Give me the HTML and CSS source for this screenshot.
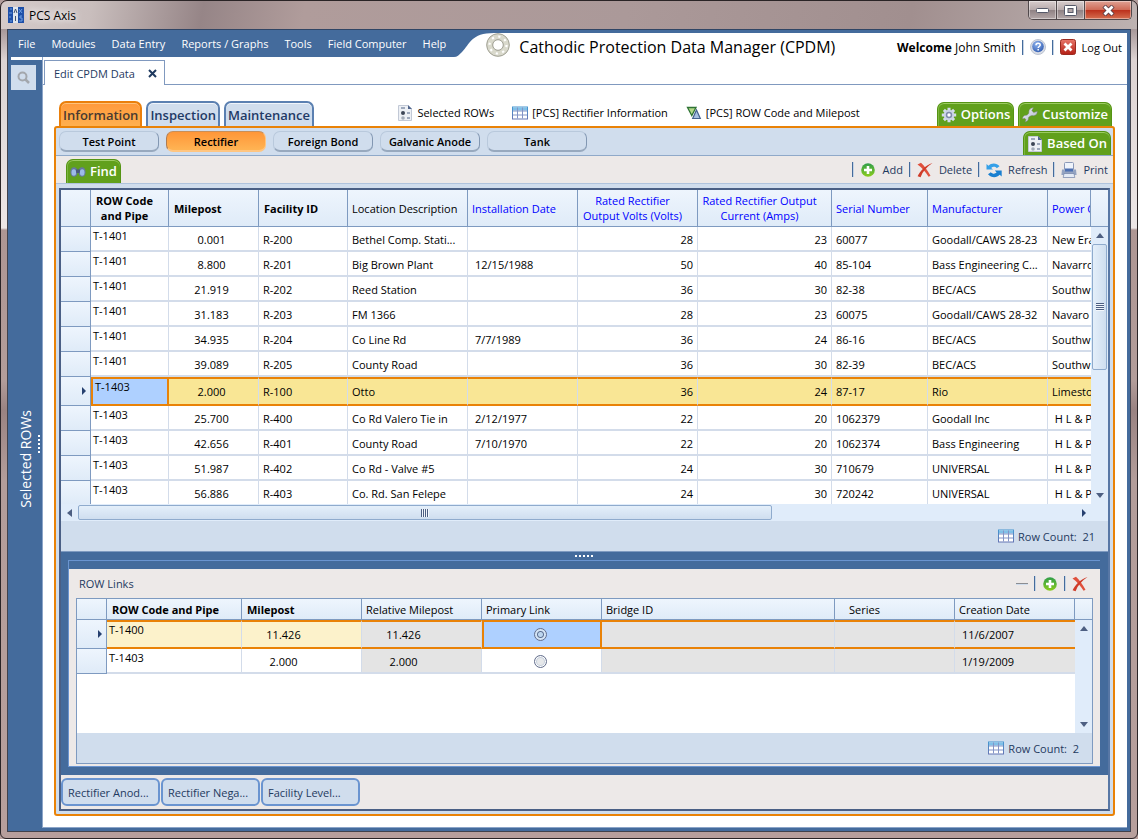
FILE: index.html
```html
<!DOCTYPE html>
<html lang="en">
<head>
    <meta charset="UTF-8">
    <meta name="viewport" content="width=device-width, initial-scale=1.0">
    <title>PCS Axis</title>
    <link rel="stylesheet" href="styles.css">
</head>
<body>
    <!-- shared icons -->
    <svg class="sprite" aria-hidden="true">
        <defs>
            <linearGradient id="g-green" x1="0" y1="0" x2="0" y2="1"><stop offset="0" stop-color="#2f9e4b"/><stop offset="1" stop-color="#8ccc1d"/></linearGradient>
            <linearGradient id="g-red" x1="0" y1="0" x2="0" y2="1"><stop offset="0" stop-color="#e8776b"/><stop offset="1" stop-color="#b41f14"/></linearGradient>
            <linearGradient id="g-table" x1="0" y1="0" x2="0" y2="1"><stop offset="0" stop-color="#4796d0"/><stop offset="1" stop-color="#6575b4"/></linearGradient>
            <linearGradient id="g-steel" x1="0" y1="0" x2="1" y2="1"><stop offset="0" stop-color="#f3f5fa"/><stop offset="1" stop-color="#a9b2c8"/></linearGradient>
            <radialGradient id="g-ball" cx=".4" cy=".3" r=".8"><stop offset="0" stop-color="#8fb4ef"/><stop offset="1" stop-color="#2b56ad"/></radialGradient>
        </defs>
        <symbol id="i-add" viewBox="0 0 16 16">
            <circle cx="8" cy="8" r="6.8" fill="url(#g-green)"/>
            <path d="M8 4v8M4 8h8" stroke="#fff" stroke-width="2.6"/>
        </symbol>
        <symbol id="i-delete" viewBox="0 0 16 16">
            <path d="M.5 2.500L4 .8c3.200 3 6.800 7.700 9.500 13l-1.900.9C8.500 9.800 5 5.800.5 2.500z" fill="#e0503c"/>
            <path d="M15.500 1C9.800 4.800 5.600 9.500 3.600 15.200l-3-.9C3.200 8.500 8.500 3.500 15.500 1z" fill="#cf3b28"/>
        </symbol>
        <symbol id="i-refresh" viewBox="0 0 16 16">
            <path d="M.5 7.500V2l2 1.700C5.300.5 10.800.6 13.500 4.200L10.800 6.200C9.200 4.400 6.800 4.400 5.200 5.900L7 7.500z" fill="#35a0e8"/>
            <path d="M15.700 8.500v5.900l-2-1.600C10.600 16.200 5 15.900 2 12.200l2.800-2c1.800 1.900 4.100 1.900 5.800.4L8.800 8.500z" fill="#1a7fd0"/>
        </symbol>
        <symbol id="i-print" viewBox="0 0 16 16">
            <rect x="3.500" y=".5" width="9" height="8" rx="1" fill="#eef3fb" stroke="#8a99b8"/>
            <path d="M1 7.500h2.500v1h9v-1H15l.6 5.500H.4z" fill="#94a3c1"/>
            <path d="M4 6.500h8v3H4z" fill="#4c6fb1"/>
            <path d="M3 11.500h10l.8 4H2.200z" fill="#e4eaf5" stroke="#7182a8" stroke-width=".7"/>
        </symbol>
        <symbol id="i-table" viewBox="0 0 16 13">
            <rect x=".5" y=".5" width="15" height="12" fill="#fff" stroke="url(#g-table)"/>
            <rect x="1" y="1" width="14" height="3" fill="#7fc0e8"/>
            <path d="M1 4.500h14M1 8.500h14M5.500 1v11M10.500 1v11" stroke="#8394c6"/>
        </symbol>
        <symbol id="i-list" viewBox="0 0 14 16">
            <path d="M.5.5h9.500L13.500 4v11.500H.5z" fill="#edf0f5" stroke="#c2c9d6"/>
            <path d="M10 0v4h4z" fill="#51658c"/>
            <circle cx="5" cy="8" r="2" fill="#3d4656"/>
            <circle cx="5" cy="13" r="1.800" fill="#a5adba"/>
            <path d="M3 3h4M9 8h3M9 13h3" stroke="#8592ab" stroke-width="1.500"/>
        </symbol>
        <symbol id="i-milepost" viewBox="0 0 16 16">
            <path d="M1.500 2.500h8.500L5.800 10.500z" fill="#b5d88a" stroke="#2f7435" stroke-width="1.300"/>
            <path d="M10.500 5L14.300 13.500H6.700z" fill="#a7bfe2" stroke="#43608f" stroke-width="1.200"/>
        </symbol>
        <symbol id="i-gear" viewBox="0 0 16 16">
            <path d="M8 .8v14.400M.8 8h14.400M2.900 2.900l10.200 10.200M13.100 2.900L2.900 13.100" stroke="#d5dcec" stroke-width="3"/>
            <circle cx="8" cy="8" r="5.300" fill="#cbd3e6"/>
            <circle cx="8" cy="8" r="3.200" fill="#7f8aaa"/>
            <circle cx="8" cy="8" r="1.700" fill="#fff"/>
        </symbol>
        <symbol id="i-wrench" viewBox="0 0 16 16">
            <path d="M11.500.8L9.800 3.600l1.900 2 3.600-1.300c.2 3-2.200 5-4.900 4.200-1.900.2-3.200 1-4 2.300.3 2-.8 3.700-3.400 4.200L4 12.800 2.700 11.300.6 12C.4 9.300 2.200 8 4.300 8.300 6 7.600 6.800 6.700 6.900 5.300 6.600 2.800 8.600.8 11.500.8z" fill="url(#g-steel)" stroke="#77826f" stroke-width=".5"/>
        </symbol>
        <symbol id="i-binoculars" viewBox="0 0 16 12">
            <ellipse cx="4" cy="6" rx="3.600" ry="4.800" fill="#65789f"/>
            <ellipse cx="12" cy="6" rx="3.600" ry="4.800" fill="#65789f"/>
            <path d="M6 3.500h4v3.500H6z" fill="#48597d"/>
            <ellipse cx="3.800" cy="6.500" rx="2.300" ry="3.200" fill="#9dbbe8"/>
            <ellipse cx="12.200" cy="6.500" rx="2.300" ry="3.200" fill="#9dbbe8"/>
        </symbol>
    </svg>

    <header class="titlebar">
        <svg class="app-icon" viewBox="0 0 16 16" aria-hidden="true">
            <rect width="16" height="16" fill="#1d4fa8"/>
            <rect x="5" width="5" height="16" fill="#dfe6ee"/>
            <path d="M2 2h2M1 6h3M1 10h2M2 14h2M11 2l3 4M14 2l-3 4M14 9h-2v2h2v3h-3" stroke="#6fa0e4" fill="none"/>
            <path d="M6 6l1.500-4L9 6M7.500 9v5" stroke="#44526c" fill="none"/>
        </svg>
        <span class="window-title">PCS Axis</span>
        <div class="window-buttons">
            <button type="button" aria-label="Minimize"><svg width="13" height="6"><rect x=".5" y="1.500" width="12" height="4" rx="1" fill="#fff" stroke="#555969"/></svg></button>
            <button type="button" aria-label="Maximize"><svg width="13" height="11"><rect x=".5" y=".5" width="12" height="10" rx="1" fill="#fff" stroke="#555969"/><rect x="4" y="3.500" width="5" height="4" fill="#b5a9aa" stroke="#555969"/></svg></button>
            <button type="button" class="close" aria-label="Close"><svg width="13" height="11" viewBox="0 0 13 11"><path d="M2 1l9 9M11 1L2 10" stroke="#5c3f46" stroke-width="4.500"/><path d="M2.500 1.500l8 8M10.500 1.500l-8 8" stroke="#fff" stroke-width="2.800"/></svg></button>
        </div>
    </header>

    <div class="app">
        <div class="app-header">
            <nav class="menu">
                <a href="#">File</a>
                <a href="#">Modules</a>
                <a href="#">Data Entry</a>
                <a href="#">Reports / Graphs</a>
                <a href="#">Tools</a>
                <a href="#">Field Computer</a>
                <a href="#">Help</a>
            </nav>
            <svg class="swoosh" viewBox="0 0 40 24" aria-hidden="true"><path d="M0 0h40C17 0 16 11 8 19 5 22 3 24 0 24z" fill="#446b9c"/></svg>
            <svg class="product-icon" viewBox="0 0 24 24" aria-hidden="true">
                <circle cx="12" cy="12" r="8.300" fill="none" stroke="#d9d9cc" stroke-width="6.500"/>
                <circle cx="12" cy="12" r="11.300" fill="none" stroke="#a3a397" stroke-width="1"/>
                <circle cx="12" cy="12" r="5.300" fill="#fff" stroke="#9c9c90" stroke-width="1"/>
                <circle cx="12" cy="12" r="8.500" fill="none" stroke="#fff" stroke-width="2.200" stroke-dasharray="2.200 4.475"/>
            </svg>
            <h1>Cathodic Protection Data Manager (CPDM)</h1>
            <div class="user">
                <span class="welcome"><b>Welcome</b> John Smith</span>
                <i class="bar"></i>
                <button type="button" aria-label="Help">
                    <svg class="icon" viewBox="0 0 16 16"><circle cx="8" cy="8" r="7.500" fill="#d9dde6" stroke="#bcc3d1"/><circle cx="8" cy="7.500" r="5.800" fill="url(#g-ball)"/><path d="M6 6.200C6 3.600 10.200 3.700 10.200 6c0 1.500-2 1.500-2 3M8.200 10v1.500" stroke="#fff" stroke-width="1.500" fill="none"/></svg>
                </button>
                <i class="bar"></i>
                <button type="button">
                    <svg class="icon" viewBox="0 0 16 16"><rect x=".5" y=".5" width="15" height="15" rx="2" fill="url(#g-red)" stroke="#9b2a20"/><path d="M4.500 4.500l7 7M11.500 4.500l-7 7" stroke="#fff" stroke-width="2.800"/></svg>
                    Log Out
                </button>
            </div>
        </div>

        <div class="body">
            <aside class="sidebar">
                <button type="button" class="search" aria-label="Search">
                    <svg width="13" height="13" viewBox="0 0 13 13"><circle cx="5.500" cy="5.500" r="4" fill="none" stroke="#a3a7ad" stroke-width="2"/><path d="M8.500 8.500l3.500 3.500" stroke="#a3a7ad" stroke-width="2.500"/></svg>
                </button>
                <span class="side-label">Selected ROWs</span>
                <i class="dots dots-v"></i>
            </aside>

            <main class="content">
                <div class="doc-tabs">
                    <div class="doc-tab">Edit CPDM Data
                        <button type="button" aria-label="Close tab"><svg width="9" height="9" viewBox="0 0 9 9"><path d="M1 1l7 7M8 1L1 8" stroke="#1f3a5f" stroke-width="2"/></svg></button>
                    </div>
                </div>

                <div class="tab-row">
                    <button type="button" class="tab active">Information</button>
                    <button type="button" class="tab">Inspection</button>
                    <button type="button" class="tab">Maintenance</button>
                    <div class="filters">
                        <a href="#"><svg class="icon"><use href="#i-list"/></svg>Selected ROWs</a>
                        <a href="#"><svg class="icon"><use href="#i-table"/></svg>[PCS] Rectifier Information</a>
                        <a href="#"><svg class="icon"><use href="#i-milepost"/></svg>[PCS] ROW Code and Milepost</a>
                    </div>
                    <button type="button" class="green"><svg class="icon"><use href="#i-gear"/></svg>Options</button>
                    <button type="button" class="green"><svg class="icon"><use href="#i-wrench"/></svg>Customize</button>
                </div>

                <section class="panel">
                    <div class="subtabs">
                        <button type="button" class="pill">Test Point</button>
                        <button type="button" class="pill active">Rectifier</button>
                        <button type="button" class="pill">Foreign Bond</button>
                        <button type="button" class="pill">Galvanic Anode</button>
                        <button type="button" class="pill">Tank</button>
                        <button type="button" class="green push"><svg class="icon"><use href="#i-list"/></svg>Based On</button>
                    </div>

                    <div class="toolbar">
                        <button type="button" class="green find"><svg class="icon"><use href="#i-binoculars"/></svg>Find</button>
                        <div class="actions">
                            <i class="bar"></i>
                            <button type="button"><svg class="icon"><use href="#i-add"/></svg>Add</button>
                            <i class="bar"></i>
                            <button type="button"><svg class="icon"><use href="#i-delete"/></svg>Delete</button>
                            <i class="bar"></i>
                            <button type="button"><svg class="icon"><use href="#i-refresh"/></svg>Refresh</button>
                            <i class="bar"></i>
                            <button type="button"><svg class="icon"><use href="#i-print"/></svg>Print</button>
                        </div>
                    </div>

                    <div class="frame">
                        <div class="grid">
                            <div class="grid-scroll">
                                <table class="rectifiers">
                                    <colgroup>
                                        <col class="c-head"><col class="c-row"><col class="c-mile"><col class="c-fac"><col class="c-loc"><col class="c-date"><col class="c-volts"><col class="c-amps"><col class="c-serial"><col class="c-mfr"><col>
                                    </colgroup>
                                    <thead>
                                        <tr>
                                            <th></th>
                                            <th class="key center">ROW Code<br>and Pipe</th>
                                            <th class="key">Milepost</th>
                                            <th class="key">Facility ID</th>
                                            <th>Location Description</th>
                                            <th class="blue">Installation Date</th>
                                            <th class="blue center">Rated Rectifier<br>Output Volts (Volts)</th>
                                            <th class="blue center">Rated Rectifier Output<br>Current (Amps)</th>
                                            <th class="blue">Serial Number</th>
                                            <th class="blue">Manufacturer</th>
                                            <th class="blue">Power C</th>
                                        </tr>
                                    </thead>
                                    <tbody>
                                        <tr><th></th><td class="code">T-1401</td><td class="mile">0.001</td><td>R-200</td><td>Bethel Comp. Stati...</td><td class="date"></td><td class="num">28</td><td class="num">23</td><td>60077</td><td>Goodall/CAWS 28-23</td><td>New Era</td></tr>
                                        <tr><th></th><td class="code">T-1401</td><td class="mile">8.800</td><td>R-201</td><td>Big Brown Plant</td><td class="date">12/15/1988</td><td class="num">50</td><td class="num">40</td><td>85-104</td><td>Bass Engineering C...</td><td>Navarro</td></tr>
                                        <tr><th></th><td class="code">T-1401</td><td class="mile">21.919</td><td>R-202</td><td>Reed Station</td><td class="date"></td><td class="num">36</td><td class="num">30</td><td>82-38</td><td>BEC/ACS</td><td>Southw</td></tr>
                                        <tr><th></th><td class="code">T-1401</td><td class="mile">31.183</td><td>R-203</td><td>FM 1366</td><td class="date"></td><td class="num">28</td><td class="num">23</td><td>60075</td><td>Goodall/CAWS 28-32</td><td>Navaro</td></tr>
                                        <tr><th></th><td class="code">T-1401</td><td class="mile">34.935</td><td>R-204</td><td>Co Line Rd</td><td class="date">7/7/1989</td><td class="num">36</td><td class="num">24</td><td>86-16</td><td>BEC/ACS</td><td>Southw</td></tr>
                                        <tr><th></th><td class="code">T-1401</td><td class="mile">39.089</td><td>R-205</td><td>County Road</td><td class="date"></td><td class="num">36</td><td class="num">30</td><td>82-39</td><td>BEC/ACS</td><td>Southw</td></tr>
                                        <tr class="current"><th><i class="arrow right"></i></th><td class="code focus">T-1403</td><td class="mile">2.000</td><td>R-100</td><td>Otto</td><td class="date"></td><td class="num">36</td><td class="num">24</td><td>87-17</td><td>Rio</td><td>Limesto</td></tr>
                                        <tr><th></th><td class="code">T-1403</td><td class="mile">25.700</td><td>R-400</td><td>Co Rd Valero Tie in</td><td class="date">2/12/1977</td><td class="num">22</td><td class="num">20</td><td>1062379</td><td>Goodall Inc</td><td>&nbsp;H L &amp; P</td></tr>
                                        <tr><th></th><td class="code">T-1403</td><td class="mile">42.656</td><td>R-401</td><td>County Road</td><td class="date">7/10/1970</td><td class="num">22</td><td class="num">20</td><td>1062374</td><td>Bass Engineering</td><td>&nbsp;H L &amp; P</td></tr>
                                        <tr><th></th><td class="code">T-1403</td><td class="mile">51.987</td><td>R-402</td><td>Co Rd - Valve #5</td><td class="date"></td><td class="num">24</td><td class="num">30</td><td>710679</td><td>UNIVERSAL</td><td>&nbsp;H L &amp; P</td></tr>
                                        <tr><th></th><td class="code">T-1403</td><td class="mile">56.886</td><td>R-403</td><td>Co. Rd. San Felepe</td><td class="date"></td><td class="num">24</td><td class="num">30</td><td>720242</td><td>UNIVERSAL</td><td>&nbsp;H L &amp; P</td></tr>
                                    </tbody>
                                </table>
                            </div>
                            <div class="vscroll">
                                <div class="cap"></div>
                                <i class="arrow up"></i>
                                <div class="thumb"><i class="grip"></i></div>
                                <i class="arrow down"></i>
                            </div>
                        </div>
                        <div class="hscroll">
                            <i class="arrow left"></i>
                            <div class="track"><div class="thumb"><i class="grip"></i></div></div>
                            <i class="arrow right"></i>
                        </div>
                        <div class="row-count"><svg class="icon"><use href="#i-table"/></svg>Row Count:&nbsp; 21</div>

                        <div class="links-wrap">
                            <i class="dots"></i>
                            <div class="links">
                                <div class="links-head">
                                    <h2>ROW Links</h2>
                                    <button type="button" aria-label="Collapse"><i class="dash"></i></button>
                                    <i class="bar"></i>
                                    <button type="button" aria-label="Add link"><svg class="icon"><use href="#i-add"/></svg></button>
                                    <i class="bar"></i>
                                    <button type="button" aria-label="Delete link"><svg class="icon"><use href="#i-delete"/></svg></button>
                                </div>
                                <div class="links-box">
                                    <div class="grid links-grid">
                                        <div class="grid-scroll">
                                            <table class="row-links">
                                                <colgroup>
                                                    <col class="c-head"><col class="c-code"><col class="c-std"><col class="c-std"><col class="c-std"><col><col class="c-std"><col class="c-std">
                                                </colgroup>
                                                <thead>
                                                    <tr>
                                                        <th></th>
                                                        <th class="key">ROW Code and Pipe</th>
                                                        <th class="key">Milepost</th>
                                                        <th>Relative Milepost</th>
                                                        <th>Primary Link</th>
                                                        <th>Bridge ID</th>
                                                        <th class="indent">Series</th>
                                                        <th>Creation Date</th>
                                                    </tr>
                                                </thead>
                                                <tbody>
                                                    <tr class="current"><th><i class="arrow right"></i></th><td class="code">T-1400</td><td class="mile">11.426</td><td class="mile off">11.426</td><td class="pick focus"><input type="radio" name="primary" aria-label="T-1400 primary link" checked></td><td class="off"></td><td class="off"></td><td class="date off">11/6/2007</td></tr>
                                                    <tr><th></th><td class="code">T-1403</td><td class="mile">2.000</td><td class="mile off">2.000</td><td class="pick"><input type="radio" name="primary" aria-label="T-1403 primary link"></td><td class="off"></td><td class="off"></td><td class="date off">1/19/2009</td></tr>
                                                </tbody>
                                            </table>
                                        </div>
                                        <div class="vscroll">
                                            <div class="cap"></div>
                                            <i class="arrow up"></i>
                                            <i class="arrow down"></i>
                                        </div>
                                    </div>
                                    <div class="row-count"><svg class="icon"><use href="#i-table"/></svg>Row Count:&nbsp; 2</div>
                                </div>
                            </div>
                        </div>

                        <div class="bottom-tabs">
                            <button type="button">Rectifier Anod...</button>
                            <button type="button">Rectifier Nega...</button>
                            <button type="button">Facility Level...</button>
                        </div>
                    </div>
                </section>
            </main>
        </div>
    </div>
</body>
</html>
```
FILE: styles.css
```css
* {
    box-sizing: border-box;
}
body {
    margin: 0;
    height: 100vh;
    display: flex;
    flex-direction: column;
    font-family: "Open Sans", "Noto Sans", sans-serif;
    font-size: 11px;
    line-height: 15px;
    color: #000;
    border: 1px solid #2a2426;
    border-radius: 7px 7px 6px 6px;
    padding: 0 6px 6px;
    background: linear-gradient(#b39d9c 0, #a29293 26px, #ddd3d2 60px, #ece6e6 228px, #ae9693 230px, #b39d9a 380px, #9a8382 410px, #b39d9a 480px, #b79f9c 100%);
    overflow: hidden;
}
button {
    font: inherit;
    color: inherit;
    padding: 0;
    border: 0;
    background: none;
    cursor: pointer;
}
a {
    color: inherit;
    text-decoration: none;
}
h1, h2 {
    margin: 0;
    font-weight: normal;
}
.sprite {
    position: absolute;
    width: 0;
    height: 0;
}
.icon {
    width: 16px;
    height: 16px;
    flex: none;
}
.bar {
    width: 2px;
    height: 15px;
    background: #446b9c;
    border-right: 1px solid #c5d3e4;
}

/* window chrome */
.titlebar {
    display: flex;
    align-items: center;
    gap: 5px;
    flex: none;
    height: 28px;
    margin: 0 -6px;
    padding-left: 7px;
    background: linear-gradient(100deg, #d5cbca 0, #c9bebd 90px, #968587 200px, #b09c9b 300px, #ab9999 55%, #a18f8f 80%, #bdb2b1 100%);
    border-radius: 7px 7px 0 0;
}
.app-icon {
    width: 16px;
    height: 16px;
}
.window-title {
    font-size: 12px;
    text-shadow: 0 0 6px #fff, 0 0 10px #fff;
}
.window-buttons {
    display: flex;
    align-self: flex-start;
    height: 19px;
    margin: 0 5px 0 auto;
    border: 1px solid #50484b;
    border-top: 0;
    border-radius: 0 0 5px 5px;
    overflow: hidden;
}
.window-buttons button {
    width: 28px;
    display: flex;
    align-items: center;
    justify-content: center;
    background: linear-gradient(#d8cdcd, #b7aaab 48%, #8e8183 50%, #b3a7a8);
    border-right: 1px solid #50484b;
    box-shadow: inset 0 0 0 1px rgba(255, 255, 255, 0.4);
}
.window-buttons .close {
    width: 46px;
    border-right: 0;
    background: linear-gradient(#e0a294, #cf6b57 48%, #bb2f1b 50%, #d56f50);
}
.app {
    flex: 1;
    min-height: 0;
    display: flex;
    flex-direction: column;
    background: #446b9c;
    border: 1px solid #41424c;
    border-top-color: #2f4565;
    padding-right: 3px;
    padding-bottom: 3px;
}

/* header */
.app-header {
    display: flex;
    flex: none;
    height: 27px;
    border-top: 3px solid #446b9c;
    background: #fff;
}
.menu {
    display: flex;
    align-items: center;
    gap: 16px;
    flex: none;
    padding: 0 8px 3px 10px;
    background: #446b9c;
    color: #fff;
}
.swoosh {
    width: 40px;
    height: 24px;
    flex: none;
}
.product-icon {
    width: 24px;
    height: 24px;
    flex: none;
    margin: 0 9px 0 -8px;
}
.app-header h1 {
    font-size: 16px;
    line-height: 28px;
    white-space: nowrap;
}
.user {
    display: flex;
    align-items: center;
    gap: 6px;
    height: 28px;
    margin-left: auto;
    padding-right: 5px;
    white-space: nowrap;
}
.welcome {
    font-size: 12px;
}
.user button {
    display: flex;
    align-items: center;
    gap: 6px;
}

.body {
    flex: 1;
    min-height: 0;
    display: flex;
}
.sidebar {
    position: relative;
    width: 34px;
    display: flex;
    flex-direction: column;
    align-items: center;
    color: #fff;
}
.sidebar::before {
    content: "";
    align-self: stretch;
    height: 3px;
    margin-left: 3px;
    background: #fff;
}
.search {
    align-self: flex-start;
    width: 25px;
    height: 25px;
    margin: 5px 0 0 3px;
    display: flex;
    align-items: center;
    justify-content: center;
    background: #d0dded;
}
.side-label {
    margin: auto;
    font-size: 14px;
    writing-mode: vertical-rl;
    transform: rotate(180deg);
}
.dots {
    display: block;
    width: 18px;
    height: 2px;
    margin: 0 auto;
    background: repeating-linear-gradient(90deg, #fff 0 2px, transparent 2px 4px);
}
.dots-v {
    position: absolute;
    right: 2px;
    top: 49%;
    width: 2px;
    height: 18px;
    background: repeating-linear-gradient(#fff 0 2px, transparent 2px 4px);
}
.content {
    flex: 1;
    min-width: 0;
    display: flex;
    flex-direction: column;
    background: #fff;
    border-left: 1px solid #8ca5c8;
    border-bottom: 1px solid #8ca5c8;
    padding: 3px 12px 11px 11px;
}
.doc-tabs {
    display: flex;
    height: 25px;
    margin: 0 -12px 0 -11px;
    padding-left: 1px;
    border-bottom: 1px solid #8099bf;
}
.doc-tab {
    display: flex;
    align-items: center;
    gap: 13px;
    height: 25px;
    padding: 0 7px 0 9px;
    background: #fff;
    border: 1px solid #8099bf;
    border-bottom: 0;
    color: #1f3a5f;
}

.tab-row {
    display: flex;
    align-items: flex-end;
    gap: 4px;
    height: 41px;
    padding: 0 3px 0 5px;
}
.tab {
    height: 25px;
    padding: 0 2px;
    font-size: 13px;
    line-height: 24px;
    font-weight: 600;
    color: #1f3a66;
    background: #d0dded;
    border: 2px solid #5b80b1;
    border-bottom: 0;
    border-radius: 7px 7px 0 0;
    box-shadow: inset 0 1px 0 #f0f5fb;
}
.tab.active {
    color: #4a3a30;
    background: linear-gradient(#ff993b, #ffb04f);
    border-color: #ea7f0b;
    box-shadow: inset 0 1px 0 #ffc27a;
}
.filters {
    display: flex;
    align-self: center;
    gap: 18px;
    margin: 14px 73px 0 auto;
    white-space: nowrap;
}
.filters a {
    display: flex;
    align-items: center;
    gap: 4px;
}
.green {
    display: flex;
    align-items: center;
    gap: 4px;
    height: 24px;
    padding: 0 3px;
    color: #fff;
    font-size: 13px;
    font-weight: 600;
    background: #61a01c;
    border: 1px solid #559414;
    border-bottom: 0;
    border-radius: 7px 7px 0 0;
    box-shadow: inset 0 1px 0 #9ccb62, inset 1px 0 0 #7db53f;
}

/* main panel */
.panel {
    flex: 1;
    min-height: 0;
    display: flex;
    flex-direction: column;
    border: 2px solid #e98207;
    border-radius: 3px;
    background: #d0dded;
}
.subtabs {
    display: flex;
    align-items: center;
    gap: 7px;
    height: 28px;
    flex: none;
    padding: 0 2px 0 3px;
    border-bottom: 1px solid #8fa9c9;
}
.pill {
    width: 100px;
    height: 21px;
    font-weight: 600;
    background: #d0dded;
    border: 1px solid #b9c9dc;
    border-right-color: #8297b2;
    border-bottom: 2px solid #98a9be;
    border-radius: 7px;
}
.pill.active {
    background: linear-gradient(#ff9638, #ffb454);
    border-color: #c98f58 #ffc580 #ffc580 #b07c50;
}
.push {
    margin-left: auto;
    align-self: flex-end;
}
.toolbar {
    display: flex;
    align-items: flex-end;
    justify-content: space-between;
    height: 28px;
    flex: none;
    padding: 0 5px 0 10px;
    background: #ede9e8;
    border-bottom: 1px solid #afc3dd;
    color: #1f3a5f;
}
.actions {
    display: flex;
    align-items: center;
    align-self: center;
    gap: 6px;
}
.actions button {
    display: flex;
    align-items: center;
    gap: 6px;
}
.frame {
    flex: 1;
    min-height: 0;
    display: flex;
    flex-direction: column;
    margin: 4px 3px 3px;
    border: 2px solid #4a5f85;
    border-right-color: #5877a5;
    background: #446b9c;
}

/* grids */
.grid {
    display: flex;
    background: #fff;
}
.grid-scroll {
    flex: 1;
    min-width: 0;
    overflow: hidden;
}
table {
    width: 100%;
    table-layout: fixed;
    border-collapse: separate;
    border-spacing: 0;
}
.c-head { width: 30px; }
.c-row { width: 78px; }
.c-mile { width: 90px; }
.c-fac { width: 89px; }
.c-loc, .c-volts, .c-mfr, .c-std { width: 120px; }
.c-date { width: 110px; }
.c-amps { width: 134px; }
.c-serial { width: 96px; }
.c-code { width: 135px; }
th {
    font-weight: normal;
    text-align: left;
    background: linear-gradient(#eef5fd, #dfebf8);
    border-right: 1px solid #7e9ac0;
    border-bottom: 1px solid #7e9ac0;
}
thead th {
    height: 37px;
    padding: 0 4px;
}
.rectifiers thead th:last-child {
    white-space: nowrap;
    overflow: hidden;
}
.row-links thead th {
    height: 21px;
}
th.key {
    font-weight: bold;
    padding-left: 5px;
}
th.center {
    text-align: center;
    padding: 0 12px 0 2px;
}
th.blue {
    color: #0000ff;
}
th.indent {
    padding-left: 14px;
}
td {
    height: 25px;
    padding: 1px 4px 0;
    white-space: nowrap;
    overflow: hidden;
    text-overflow: ellipsis;
    border-right: 1px solid #d3dcea;
    border-bottom: 2px solid #d3dcea;
}
td:last-child {
    text-overflow: clip;
    border-right: 0;
}
td.code {
    padding: 1px 2px;
    vertical-align: top;
}
td.mile {
    padding-right: 8px;
    text-align: center;
}
.row-links .mile {
    padding-right: 40px;
}
td.num {
    text-align: right;
}
td.date {
    padding-left: 7px;
}
td.off {
    background: #e4e4e4;
}
td.pick {
    padding-right: 7px;
}
.current td {
    height: 29px;
    padding-top: 0;
    background: #f9e695;
    border-top: 2px solid #e98207;
    border-bottom: 2px solid #e98207;
}
.rectifiers tr:last-child td,
.rectifiers tbody tr:last-child th {
    height: 23px;
    border-bottom: 0;
}
.row-links .current td {
    background: #fcf2cb;
}
.row-links .current .off {
    background: #e4e4e4;
}
.current .focus,
.row-links .current .focus {
    background: #aed0ff;
    border: 2px solid #e98207;
}
tbody th .arrow {
    display: block;
    margin: 0 3px 0 auto;
}
input[type="radio"] {
    appearance: none;
    display: block;
    width: 13px;
    height: 13px;
    margin: 0 auto;
    border: 1px solid #646f8d;
    border-radius: 50%;
    background: #e6e8ea;
    box-shadow: inset 0 0 0 1px #fff, inset 0 0 0 2px #c6cfdb;
}
input[type="radio"]:checked {
    background: radial-gradient(circle, #bdd6ef 0 2px, #5c6f92 3px, #d4e4f5 4px);
    box-shadow: none;
}

/* scrollbars */
.arrow {
    width: 0;
    height: 0;
    border: 4px solid transparent;
}
.arrow.right { border-left: 4px solid #26406f; border-right: 0; }
.arrow.left { border-right: 5px solid #4d5f82; border-left: 0; }
.arrow.up { border-bottom: 5px solid #4d5f82; border-top: 0; }
.arrow.down { border-top: 5px solid #4d5f82; border-bottom: 0; }
.vscroll {
    width: 17px;
    display: flex;
    flex-direction: column;
    align-items: center;
    background: #e0ecfa;
}
.vscroll .cap {
    align-self: stretch;
    height: 37px;
    background: linear-gradient(#eef5fd, #dfebf8);
    border-bottom: 1px solid #7e9ac0;
}
.vscroll .up {
    margin: 6px 0;
}
.vscroll .down {
    margin: auto 0 6px;
}
.thumb {
    display: flex;
    align-items: center;
    justify-content: center;
    background: linear-gradient(90deg, #e4effa, #cfdeef);
    border: 1px solid #8fabcd;
    border-radius: 2px;
}
.vscroll .thumb {
    width: 15px;
    height: 126px;
}
.grip {
    width: 8px;
    height: 8px;
    background: repeating-linear-gradient(#4d5f82 0 1px, #f3f7fc 1px 2px);
}
.hscroll {
    display: flex;
    align-items: center;
    flex: none;
    height: 17px;
    padding: 0 22px 0 6px;
    background: #e0ecfa;
}
.hscroll .track {
    flex: 1;
    margin: 0 12px 0 6px;
}
.hscroll .thumb {
    width: 70%;
    height: 15px;
    background: linear-gradient(#e4effa, #cfdeef);
}
.hscroll .grip {
    background: repeating-linear-gradient(90deg, #4d5f82 0 1px, #f3f7fc 1px 2px);
}
.row-count {
    display: flex;
    align-items: center;
    justify-content: flex-end;
    gap: 4px;
    flex: none;
    height: 30px;
    padding-right: 13px;
    background: #d0dded;
    color: #1f3a5f;
}

/* linked rows */
.links-wrap {
    flex: 1;
    min-height: 0;
    display: flex;
    flex-direction: column;
    padding: 3px 8px 8px 7px;
    border-top: 1px solid #7e9ac0;
}
.links {
    flex: 1;
    min-height: 0;
    display: flex;
    flex-direction: column;
    margin-top: 3px;
    padding: 0 7px 2px;
    background: #ede9e8;
    border: 1px solid #6a94d0;
    border-top: 0;
    border-right: 0;
}
.links::before {
    content: "";
    flex: none;
    height: 8px;
    margin: 0 -7px;
    background: #446b9c;
    border-top: 1px solid #6a94d0;
}
.links-head {
    display: flex;
    align-items: center;
    gap: 6px;
    flex: none;
    height: 29px;
    padding: 0 5px 0 3px;
}
.links-head h2 {
    margin-right: auto;
    font-size: 11px;
    color: #1f3a5f;
}
.links-head button {
    display: flex;
}
.dash {
    width: 12px;
    height: 2px;
    background: #8b8d92;
    border-bottom: 1px solid #d0dded;
}
.links-box {
    flex: 1;
    min-height: 0;
    display: flex;
    flex-direction: column;
    border: 1px solid #7e9ac0;
}
.links-grid {
    flex: 1;
    min-height: 0;
}
.links-grid .cap {
    height: 21px;
}
.bottom-tabs {
    display: flex;
    align-items: center;
    gap: 1px;
    flex: none;
    height: 34px;
    background: #ede9e8;
}
.bottom-tabs button {
    width: 99px;
    height: 28px;
    padding-left: 5px;
    text-align: left;
    background: #d0dded;
    border: 2px solid #6a94d0;
    border-radius: 6px;
    color: #1f3a5f;
}
```
